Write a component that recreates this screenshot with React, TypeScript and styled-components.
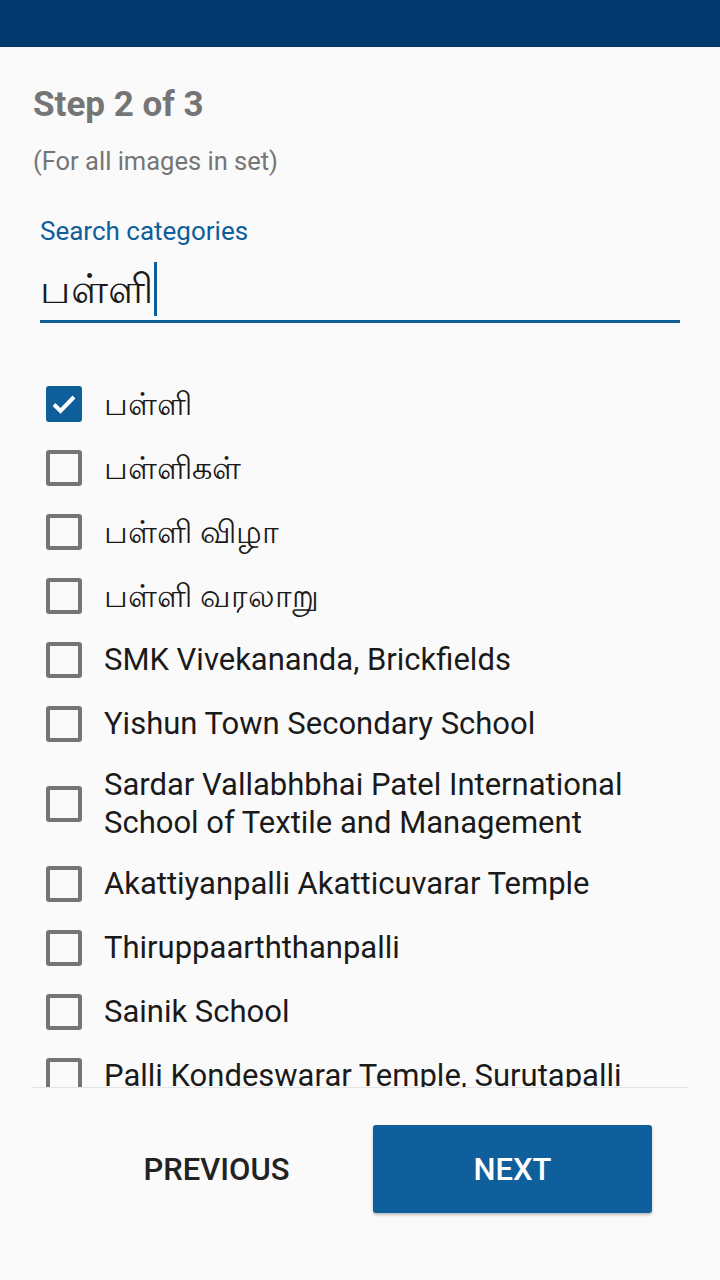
import { createGlobalStyle } from "styled-components";
import styled from "styled-components";

const GlobalStyle = createGlobalStyle`
  html, body {
    margin: 0;
    padding: 0;
    background: #fafafa;
  }
  body {
    font-family: Roboto, "Noto Sans", "DejaVu Sans", sans-serif;
  }
`;

const categories = [
    { name: "பள்ளி", checked: true, tamil: true },
    { name: "பள்ளிகள்", tamil: true },
    { name: "பள்ளி விழா", tamil: true },
    { name: "பள்ளி வரலாறு", tamil: true },
    { name: "SMK Vivekananda, Brickfields" },
    { name: "Yishun Town Secondary School" },
    { name: "Sardar Vallabhbhai Patel International School of Textile and Management" },
    { name: "Akattiyanpalli Akatticuvarar Temple" },
    { name: "Thiruppaarththanpalli" },
    { name: "Sainik School" },
    { name: "Palli Kondeswarar Temple, Surutapalli" },
];

export default function App() {
    return (
        <>
        <GlobalStyle />
        <Screen>
            <TopBar />
            <Main>
                <Title>Step 2 of 3</Title>
                <Subtitle>(For all images in set)</Subtitle>
                <Field>
                    <FieldLabel>Search categories</FieldLabel>
                    <FieldInput>
                        பள்ளி<Caret />
                    </FieldInput>
                </Field>
                <List>
                    {categories.map((c) => (
                        <Item key={c.name}>
                            <Box checked={!!c.checked}>
                                {c.checked && (
                                    <svg width="30" height="30" viewBox="0 0 30 30">
                                        <polyline points="5,15.5 11.5,22 25,8" fill="none" stroke="#fff" strokeWidth="4" />
                                    </svg>
                                )}
                            </Box>
                            <ItemText tamil={!!c.tamil}>{c.name}</ItemText>
                        </Item>
                    ))}
                </List>
            </Main>
            <Footer>
                <TextButton>PREVIOUS</TextButton>
                <PrimaryButton>NEXT</PrimaryButton>
            </Footer>
        </Screen>
        </>
    )
}

const Screen = styled.div`
    display: flex;
    flex-direction: column;
    height: 1280px;
    width: 720px;
    overflow: hidden;
`;

const TopBar = styled.div`
    height: 47px;
    background: #023a6e;
    flex-shrink: 0;
`;

const Main = styled.div`
    flex: 1;
    min-height: 0;
    display: flex;
    flex-direction: column;
    padding: 0 32px;
`;

const Title = styled.div`
    margin-top: 38px;
    font-size: 35px;
    line-height: 40px;
    font-weight: 700;
    color: #757575;
    padding-left: 1px;
`;

const Subtitle = styled.div`
    margin-top: 20px;
    font-size: 25.5px;
    line-height: 32px;
    color: #757575;
    padding-left: 1px;
`;

const Field = styled.div`
    margin: 38px 8px 0;
    display: flex;
    flex-direction: column;
`;

const FieldLabel = styled.div`
    font-size: 26px;
    line-height: 32px;
    color: #0e5e9a;
`;

const FieldInput = styled.div`
    margin-top: 15px;
    display: flex;
    align-items: center;
    font-size: 41px;
    line-height: 48px;
    color: #1a1a1a;
    padding-bottom: 4px;
    border-bottom: 3px solid #0e5e9a;
`;

const Caret = styled.span`
    display: inline-block;
    width: 3px;
    height: 54px;
    background: #0e5e9a;
    margin-left: 1px;
`;

const List = styled.div`
    flex: 1;
    min-height: 0;
    overflow: hidden;
    padding: 49px 14px 0;
`;

const Item = styled.div`
    display: flex;
    align-items: center;
    gap: 22px;
    min-height: 64px;
    padding: 10px 0;
    box-sizing: border-box;
`;

const Box = styled.div<{ checked: boolean }>`
    flex-shrink: 0;
    width: 36px;
    height: 36px;
    box-sizing: border-box;
    border-radius: 3px;
    display: flex;
    align-items: center;
    justify-content: center;
    background: ${(p) => (p.checked ? "#0e5e9a" : "transparent")};
    border: ${(p) => (p.checked ? "none" : "4px solid #757575")};
`;

const ItemText = styled.div<{ tamil: boolean }>`
    font-size: ${(p) => (p.tamil ? "32px" : "31px")};
    line-height: 38px;
    color: #1a1a1a;
`;

const Footer = styled.div`
    flex-shrink: 0;
    height: 193px;
    box-sizing: border-box;
    margin: 0 32px;
    border-top: 1px solid #e4e4e4;
    display: flex;
    align-items: flex-start;
    padding: 37px 4px 0 45px;
    gap: 17px;
`;

const TextButton = styled.button`
    width: 279px;
    height: 88px;
    border: 0;
    background: transparent;
    font-family: Roboto, sans-serif;
    font-size: 31px;
    font-weight: 500;
    color: #222;
`;

const PrimaryButton = styled(TextButton)`
    background: #0f5f9d;
    color: #fff;
    border-radius: 3px;
    box-shadow: 0 2px 3px rgba(0, 0, 0, 0.25);
`;
